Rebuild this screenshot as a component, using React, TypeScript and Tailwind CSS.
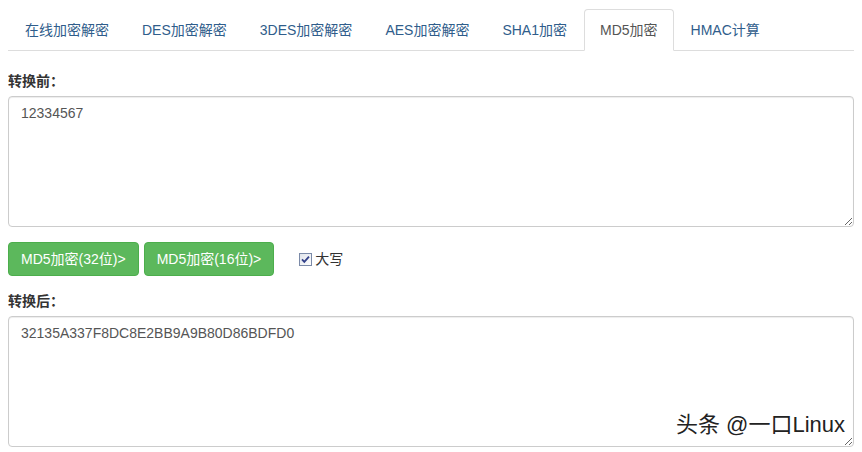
import React from "react";

const tabs = ["在线加密解密", "DES加密解密", "3DES加密解密", "AES加密解密", "SHA1加密", "MD5加密", "HMAC计算"];

function CheckIcon() {
  return (
    <svg width="13" height="13" viewBox="0 0 13 13" className="block">
      <defs>
        <linearGradient id="cbg" x1="0" y1="0" x2="1" y2="1">
          <stop offset="0" stopColor="#dfe3ea" />
          <stop offset="1" stopColor="#ffffff" />
        </linearGradient>
      </defs>
      <rect x="0.5" y="0.5" width="12" height="12" fill="url(#cbg)" stroke="#7b8aa8" />
      <path d="M3 6.3 L5.3 8.8 L10 3.6" fill="none" stroke="#33418a" strokeWidth="1.8" />
    </svg>
  );
}

export default function App() {
  return (
    <div className="w-[862px] h-[452px] bg-white px-2 pt-[9px] font-['Liberation_Sans','Noto_Sans_CJK_SC',sans-serif] text-[14px] leading-5 text-[#333] overflow-hidden">
      <ul className="flex border-b border-[#ddd] pl-px">
        {tabs.map((t) => {
          const active = t === "MD5加密";
          return (
            <li key={t} className="mr-px -mb-px">
              <span
                className={
                  active
                    ? "block px-[15px] py-[10px] border border-[#ddd] border-b-transparent rounded-t-[4px] bg-white text-[#555]"
                    : "block px-[15px] py-[10px] border border-transparent rounded-t-[4px] text-[#2f5d8b]"
                }
              >
                {t}
              </span>
            </li>
          );
        })}
      </ul>

      <div className="mt-5 font-bold mb-[5px]">转换前：</div>
      <textarea
        className="block w-full h-[131px] border border-[#ccc] rounded-[4px] px-3 py-[6px] text-[#555] shadow-[inset_0_1px_1px_rgba(0,0,0,0.075)] outline-none"
        defaultValue="12334567"
      />

      <div className="mt-[15px] flex items-center">
        <button className="h-[34px] px-3 border border-[#4cae4c] bg-[#5cb85c] text-white rounded-[4px]">
          MD5加密(32位)&gt;
        </button>
        <button className="ml-[5px] h-[34px] px-3 border border-[#4cae4c] bg-[#5cb85c] text-white rounded-[4px]">
          MD5加密(16位)&gt;
        </button>
        <span className="ml-[25px]">
          <CheckIcon />
        </span>
        <span className="ml-[3px]">大写</span>
      </div>

      <div className="mt-[15px] font-bold mb-[5px]">转换后：</div>
      <div className="relative">
        <textarea
          className="block w-full h-[131px] border border-[#ccc] rounded-[4px] px-3 py-[6px] text-[#555] shadow-[inset_0_1px_1px_rgba(0,0,0,0.075)] outline-none"
          defaultValue="32135A337F8DC8E2BB9A9B80D86BDFD0"
        />
        <div className="absolute right-[9px] bottom-[8px] text-[22px] leading-[28px] text-[#222] [text-shadow:0_0_2px_#fff,0_0_2px_#fff] pointer-events-none">
          头条 @一口Linux
        </div>
      </div>
    </div>
  );
}
